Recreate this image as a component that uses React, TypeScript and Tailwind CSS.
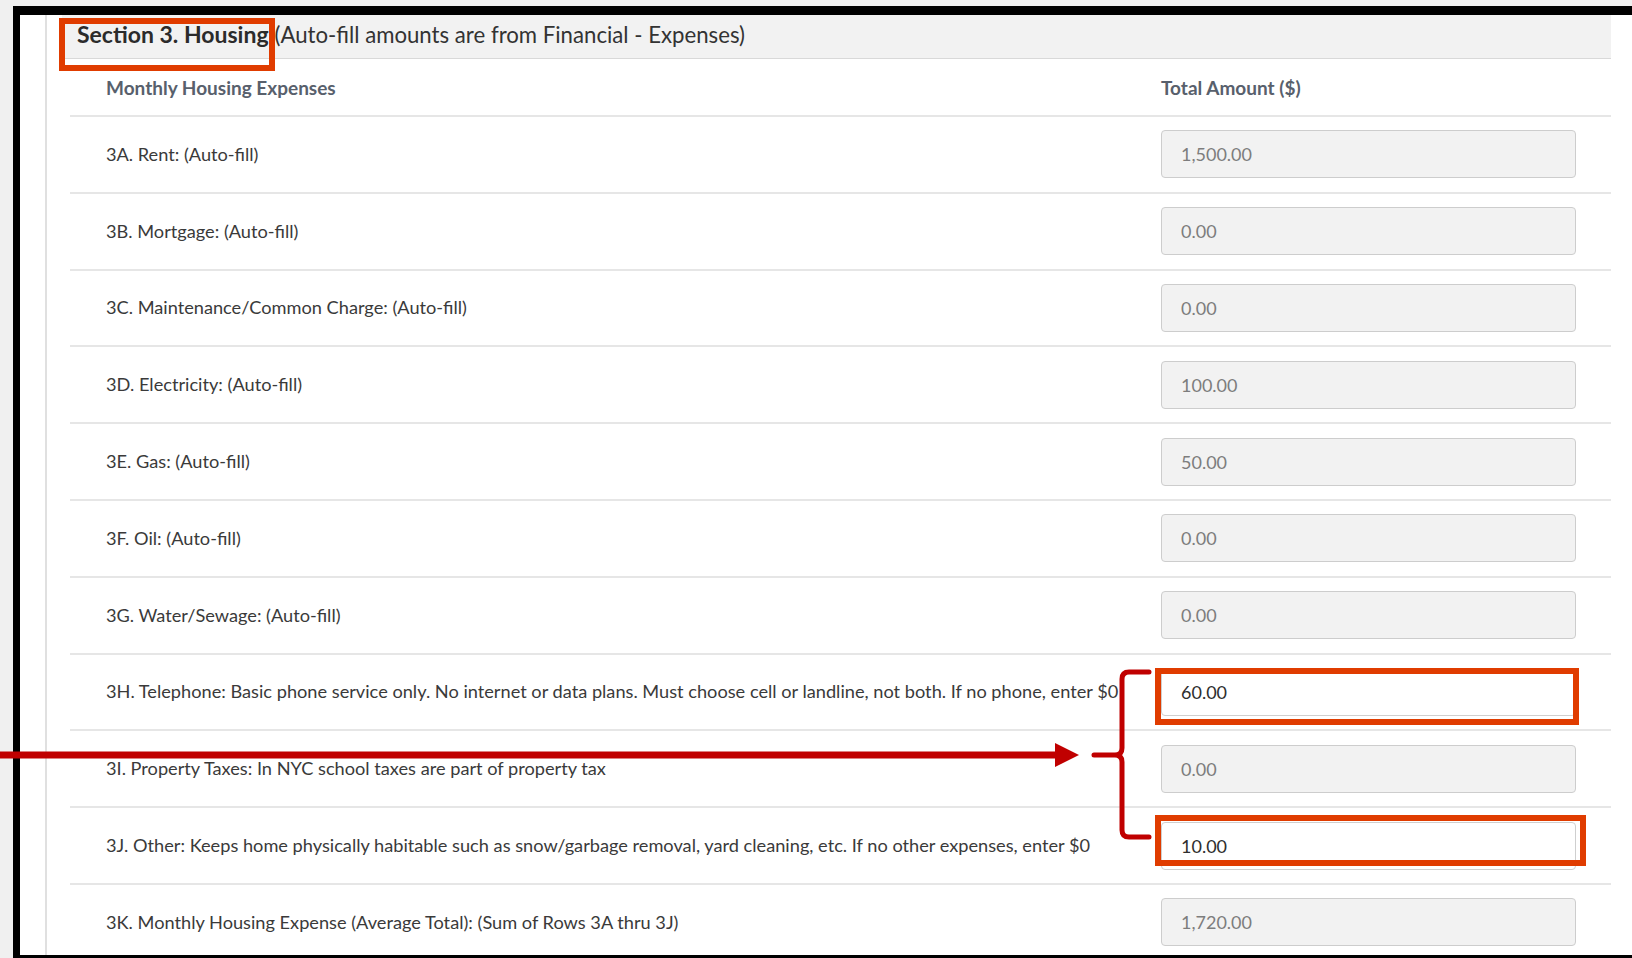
import React from "react";

type Row = {
  label: string;
  amount: string;
  editable?: boolean;
};

const rows: Row[] = [
  { label: "3A. Rent: (Auto-fill)", amount: "1,500.00" },
  { label: "3B. Mortgage: (Auto-fill)", amount: "0.00" },
  { label: "3C. Maintenance/Common Charge: (Auto-fill)", amount: "0.00" },
  { label: "3D. Electricity: (Auto-fill)", amount: "100.00" },
  { label: "3E. Gas: (Auto-fill)", amount: "50.00" },
  { label: "3F. Oil: (Auto-fill)", amount: "0.00" },
  { label: "3G. Water/Sewage: (Auto-fill)", amount: "0.00" },
  {
    label:
      "3H. Telephone: Basic phone service only. No internet or data plans. Must choose cell or landline, not both. If no phone, enter $0",
    amount: "60.00",
    editable: true,
  },
  { label: "3I. Property Taxes: In NYC school taxes are part of property tax", amount: "0.00" },
  {
    label:
      "3J. Other: Keeps home physically habitable such as snow/garbage removal, yard cleaning, etc. If no other expenses, enter $0",
    amount: "10.00",
    editable: true,
  },
  { label: "3K. Monthly Housing Expense (Average Total): (Sum of Rows 3A thru 3J)", amount: "1,720.00" },
];

function AmountField({ value, editable }: { value: string; editable?: boolean }) {
  return (
    <input
      readOnly
      value={value}
      className={
        editable
          ? "h-[48px] w-[415px] rounded-[4px] border border-[#cfcfcf] bg-white px-[19px] text-[18px] text-[#2e2e2e] outline-none"
          : "h-[48px] w-[415px] rounded-[4px] border border-[#cdcdcd] bg-[#f2f2f2] px-[19px] text-[18px] text-[#7d7d7d] outline-none"
      }
    />
  );
}

// Red markup drawn over the form: arrow, brace and highlight boxes
function Markup() {
  return (
    <>
      <div className="pointer-events-none absolute left-[59px] top-[18px] h-[53px] w-[216px] border-[6px] border-[#e03c00]" />
      <div className="pointer-events-none absolute left-[1155px] top-[668px] h-[57px] w-[424px] border-[6px] border-[#e03c00]" />
      <div className="pointer-events-none absolute left-[1155px] top-[815px] h-[51px] w-[431px] border-[6px] border-[#e03c00]" />
      <svg className="pointer-events-none absolute left-0 top-0" width="1632" height="958" viewBox="0 0 1632 958">
        <rect x="0" y="751.5" width="1058" height="7" fill="#c00000" />
        <polygon points="1055,743 1079,755 1055,767" fill="#c00000" />
        <path
          d="M1149 672 H1129 Q1122 672 1122 679 V748 Q1122 755 1115 755 H1094 M1115 755 Q1122 755 1122 762 V830 Q1122 837 1129 837 H1149"
          fill="none"
          stroke="#c00000"
          strokeWidth="5"
          strokeLinecap="round"
          strokeLinejoin="round"
        />
      </svg>
    </>
  );
}

export default function App() {
  return (
    <div
      className="relative h-[958px] w-full overflow-hidden bg-[#f0f0f0]"
      style={{ fontFamily: "Lato, 'Open Sans', sans-serif" }}
    >
      <div className="ml-[13px] mt-[6px] flex h-[952px] border-b-[3px] border-l-[7px] border-t-[9px] border-black bg-white">
        <div className="w-[27px] shrink-0 border-r-2 border-[#e0e0e0]" />
        <div className="flex-1 pl-[15px] pr-[21px]">
          <div className="flex h-[44px] items-center border-b border-[#d9d9d9] bg-[#f2f2f2] pb-[4px] pl-[15px] text-[22.2px] text-[#333]">
            <span className="text-[23px] font-bold text-[#2b2b2b]">Section 3. Housing</span>
            <span className="ml-[6px]">(Auto-fill amounts are from Financial - Expenses)</span>
          </div>
          <div className="ml-[8px]">
            <div className="flex h-[58px] items-center border-b-2 border-[#e6e6e6] pl-[36px] pr-[35px] pt-[3px] text-[19px] font-bold text-[#58606c]">
              <div className="flex-1">Monthly Housing Expenses</div>
              <div className="w-[415px]">Total Amount ($)</div>
            </div>
            {rows.map((row) => (
              <div
                key={row.label}
                className="flex h-[76.8px] items-center border-b-2 border-[#e6e6e6] pl-[36px] pr-[35px]"
              >
                <div className="flex-1 whitespace-nowrap text-[18.2px] text-[#3a3a3a]">{row.label}</div>
                <AmountField value={row.amount} editable={row.editable} />
              </div>
            ))}
          </div>
        </div>
      </div>
      <Markup />
    </div>
  );
}
